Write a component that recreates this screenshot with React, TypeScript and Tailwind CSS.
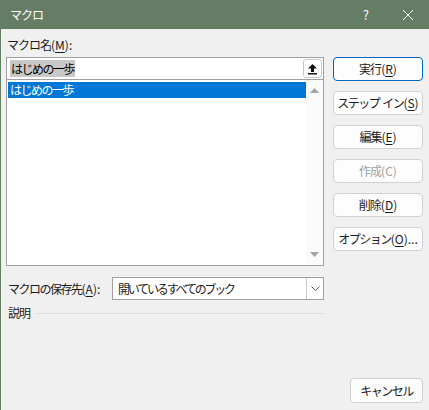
import type { ReactNode } from "react";

const FONT = "font-['Yu_Gothic_UI','Noto_Sans_CJK_JP',sans-serif]";

// accelerator key in parentheses, e.g. (R) with R underlined
function Key({ k, u = true }: { k: string; u?: boolean }) {
  return (
    <span className="tracking-normal">
      ({u ? <span className="underline underline-offset-2 decoration-1">{k}</span> : k})
    </span>
  );
}

function Btn({
  children,
  primary,
  disabled,
}: {
  children: ReactNode;
  primary?: boolean;
  disabled?: boolean;
}) {
  return (
    <button
      type="button"
      className={`flex h-[24px] w-[90px] items-center justify-center whitespace-nowrap rounded-[4px] border bg-[#fdfdfd] text-[12px] leading-none ${
        primary ? "border-[#0067c0]" : "border-[#d0d0d0]"
      } ${disabled ? "text-[#a0a0a0]" : "text-[#1b1b1b]"}`}
    >
      {children}
    </button>
  );
}

export default function App() {
  return (
    <div className={`flex h-[410px] w-[429px] flex-col border-l border-[#657d65] bg-[#f0f0f0] tracking-[-1px] ${FONT}`}>
      {/* title bar */}
      <div className="flex h-[29px] shrink-0 items-center bg-[#657d65] pl-[9px] text-[12px] text-white">
        <span>マクロ</span>
        <span className="ml-auto mr-[34px] text-[13px]">?</span>
        <svg width="12" height="12" viewBox="0 0 12 12" className="mr-[15px]">
          <path d="M1 1 L11 11 M11 1 L1 11" stroke="white" strokeWidth="1" />
        </svg>
      </div>

      <div className="flex flex-1 flex-col px-[5px]">
        <div className="flex gap-[9px]">
          {/* left column */}
          <div className="flex w-[318px] flex-col">
            <div className="flex h-[28px] items-end pb-[6px] pl-[1px] text-[12px] leading-none text-[#1b1b1b]">
              マクロ名<Key k="M" />
              <span className="tracking-normal">:</span>
            </div>
            <div className="flex h-[23px] items-center border border-[#a0a0a0] bg-white pl-[3px] pr-[1px]">
              <span className="bg-[#c8c8c8] px-[1px] text-[12px] leading-[17px] tracking-[-1.5px] text-black">はじめの一歩</span>
              <div className="ml-auto flex h-[19px] w-[19px] items-center justify-center rounded-[3px] border border-[#c8c8c8] bg-white">
                <svg width="11" height="12" viewBox="0 0 11 12">
                  <path d="M5.5 1 L10 5.5 L7 5.5 L7 9 L4 9 L4 5.5 L1 5.5 Z" fill="#111" />
                  <rect x="1" y="10" width="9" height="1.5" fill="#111" />
                </svg>
              </div>
            </div>
            <div className="flex h-[186px] border border-t-0 border-[#a0a0a0] bg-white">
              <div className="flex-1 pl-[1px] pt-[2px]">
                <div className="h-[16px] bg-[#0078d7] pl-[2px] text-[12px] leading-[16px] tracking-[-1.5px] text-white">はじめの一歩</div>
              </div>
              <div className="flex w-[17px] flex-col items-center justify-between bg-[#fafafa] py-[8px]">
                <svg width="9" height="5" viewBox="0 0 9 5">
                  <path d="M0 5 L4.5 0 L9 5 Z" fill="#a3a3a3" />
                </svg>
                <svg width="9" height="5" viewBox="0 0 9 5">
                  <path d="M0 0 L9 0 L4.5 5 Z" fill="#a3a3a3" />
                </svg>
              </div>
            </div>
          </div>

          {/* right column */}
          <div className="flex flex-col gap-[10px] pt-[28px]">
            <Btn primary>
              実行<Key k="R" />
            </Btn>
            <Btn>
              <span className="tracking-[-1.5px]">ステップ</span>
              <span className="ml-[3px] tracking-[-1.5px]">イン</span>
              <Key k="S" />
            </Btn>
            <Btn>
              編集<Key k="E" />
            </Btn>
            <Btn disabled>
              作成<Key k="C" u={false} />
            </Btn>
            <Btn>
              削除<Key k="D" />
            </Btn>
            <Btn>
              <span className="tracking-[-1.5px]">オプション</span>
              <Key k="O" />
              <span className="tracking-normal">...</span>
            </Btn>
          </div>
        </div>

        {/* save location */}
        <div className="mt-[11px] flex w-[318px] items-center">
          <span className="w-[106px] whitespace-nowrap pl-[2px] text-[12px] leading-none text-[#1b1b1b]">
            <span className="tracking-[-1.5px]">マクロの保存先</span>
            <Key k="A" />
            <span className="tracking-normal">:</span>
          </span>
          <div className="flex h-[23px] flex-1 items-center border border-[#a0a0a0] bg-white">
            <span className="pl-[5px] text-[12px] leading-none tracking-[-2.2px] text-[#1b1b1b]">開いているすべてのブック</span>
            <div className="ml-auto flex h-full w-[17px] items-center justify-center border-l border-[#c8c8c8]">
              <svg width="9" height="5" viewBox="0 0 9 5">
                <path d="M0.5 0.5 L4.5 4.5 L8.5 0.5" stroke="#555" strokeWidth="1" fill="none" />
              </svg>
            </div>
          </div>
        </div>

        {/* description */}
        <div className="mt-[7px] flex w-[318px] items-center gap-[6px] pl-[2px]">
          <span className="text-[12px] leading-none text-[#1b1b1b]">説明</span>
          <div className="h-px flex-1 bg-[#dcdcdc]" />
        </div>

        <div className="mt-auto mb-[7px] flex justify-end pr-[1px]">
          <button
            type="button"
            className="flex h-[25px] w-[73px] items-center justify-center rounded-[4px] border border-[#d0d0d0] bg-[#fdfdfd] text-[12px] leading-none tracking-[-1.5px] text-[#1b1b1b]"
          >
            キャンセル
          </button>
        </div>
      </div>
    </div>
  );
}
